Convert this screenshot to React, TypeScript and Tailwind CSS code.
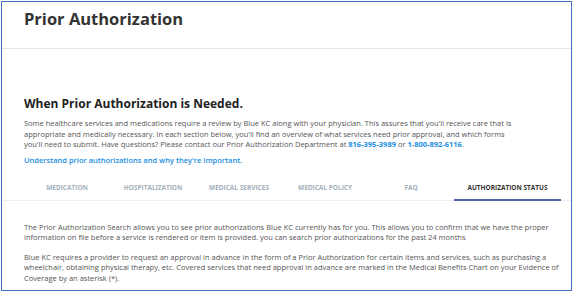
const TABS = [
  { label: "MEDICATION", width: "w-[86px]" },
  { label: "HOSPITALIZATION", width: "w-[86px]" },
  { label: "MEDICAL SERVICES", width: "w-[86px]" },
  { label: "MEDICAL POLICY", width: "w-[86px]" },
  { label: "FAQ", width: "w-[86px]" },
  { label: "AUTHORIZATION STATUS", width: "w-[107px]", active: true },
];

export default function App() {
  return (
    <div className="w-[574px] h-[292px] bg-white pl-px pt-px font-['Open_Sans',sans-serif]">
      <div className="w-[571px] h-[290px] border border-[#4472c4] overflow-hidden">
        <header className="h-[47px] border-b border-[#e1e5eb] pl-[22px] pt-[6px]">
          <h1 className="text-[16.5px] font-bold leading-[22px] text-[#333]">Prior Authorization</h1>
        </header>

        <section className="pl-[22px] pr-[56px] pt-[46px]">
          <h2 className="text-[12px] font-bold leading-[17px] text-[#222]">
            When Prior Authorization is Needed.
          </h2>
          <p className="mt-[6px] text-[7.5px] leading-[10.5px] text-[#555]">
            Some healthcare services and medications require a review by Blue KC along with your physician. This assures that
            you'll receive care that is appropriate and medically necessary. In each section below, you'll find an overview of
            what services need prior approval, and which forms you'll need to submit. Have questions? Please contact our Prior
            Authorization Department at <b className="text-[#1a8ee0]">816-395-3989</b> or{" "}
            <b className="text-[#1a8ee0]">1-800-892-6116</b>.
          </p>
          <p className="mt-[5px] text-[7.5px] font-semibold leading-[10px] text-[#1a8ee0]">
            Understand prior authorizations and why they're important.
          </p>
        </section>

        <nav className="mt-[18px] flex border-b border-[#eceef1] pl-[22px]">
          {TABS.map((tab) => (
            <div
              key={tab.label}
              className={`${tab.width} pb-[7px] text-center text-[6.5px] font-bold leading-[9px] ${
                tab.active ? "border-b-2 border-[#4a63b3] text-[#333] -mb-px" : "text-[#a3b1bd]"
              }`}
            >
              {tab.label}
            </div>
          ))}
        </nav>

        <section className="pl-[22px] pr-[12px] pt-[21px] text-[7.5px] leading-[10.5px] text-[#555]">
          <p>
            The Prior Authorization Search allows you to see prior authorizations Blue KC currently has for you. This allows you
            to confirm that we have the proper information on file before a service is rendered or item is provided. you can
            search prior authorizations for the past 24 months
          </p>
          <p className="mt-[9px]">
            Blue KC requires a provider to request an approval in advance in the form of a Prior Authorization for certain items
            and services, such as purchasing a wheelchair, obtaining physical therapy, etc. Covered services that need approval
            in advance are marked in the Medical Benefits Chart on your Evidence of Coverage by an asterisk (*).
          </p>
        </section>
      </div>
    </div>
  );
}
